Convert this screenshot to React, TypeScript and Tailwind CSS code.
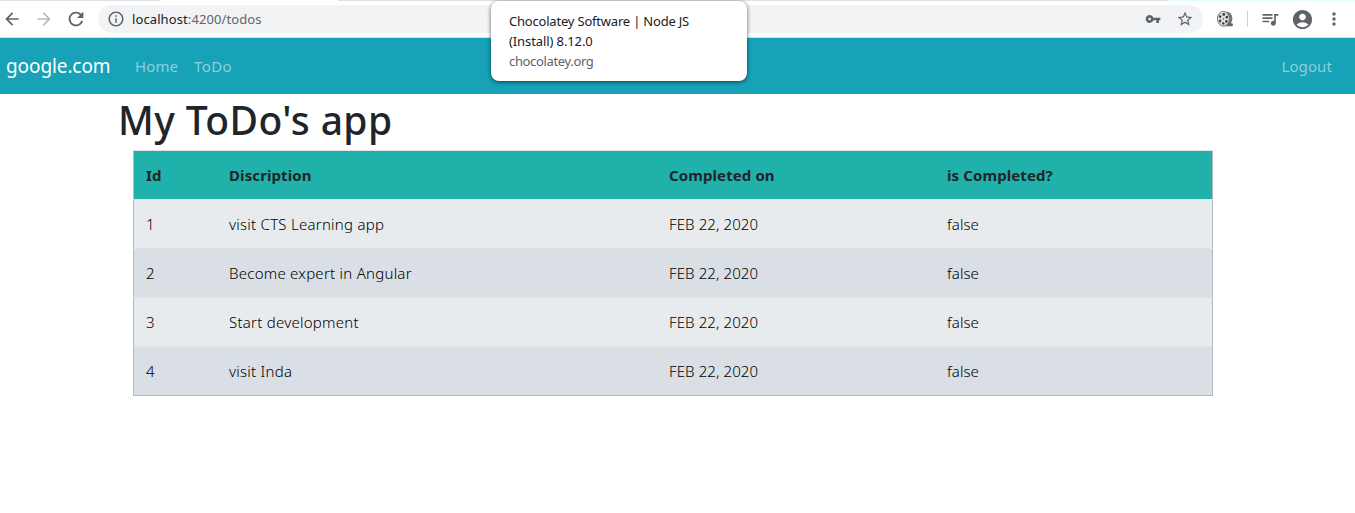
import { ReactNode } from "react";
import {
  MdArrowBack,
  MdArrowForward,
  MdRefresh,
  MdInfoOutline,
  MdVpnKey,
  MdStarBorder,
  MdQueueMusic,
  MdAccountCircle,
  MdMoreVert,
} from "react-icons/md";

const todos = [
  { id: 1, description: "visit CTS Learning app", date: "FEB 22, 2020", done: "false" },
  { id: 2, description: "Become expert in Angular", date: "FEB 22, 2020", done: "false" },
  { id: 3, description: "Start development", date: "FEB 22, 2020", done: "false" },
  { id: 4, description: "visit Inda", date: "FEB 22, 2020", done: "false" },
];

function Slot({ children, className }: { children: ReactNode; className: string }) {
  return <span className={`flex h-full shrink-0 items-center justify-center ${className}`}>{children}</span>;
}

function FilmReel() {
  return (
    <svg width="18" height="18" viewBox="0 0 18 18">
      <ellipse cx="11" cy="8.5" rx="5.4" ry="6.8" fill="#777" />
      <path d="M9 16.2h7.6l.4-2.4-3-1z" fill="#666" />
      <ellipse cx="7.4" cy="8.8" rx="6" ry="7.4" fill="#dedede" stroke="#6a6a6a" strokeWidth="0.9" />
      <g fill="#333">
        <ellipse cx="7.8" cy="4.4" rx="1.3" ry="1.3" />
        <ellipse cx="4.2" cy="6.6" rx="1.1" ry="1.4" />
        <ellipse cx="10.8" cy="7.2" rx="1.1" ry="1.4" />
        <ellipse cx="4.2" cy="11" rx="1.1" ry="1.4" />
        <ellipse cx="10.4" cy="11.4" rx="1.1" ry="1.4" />
        <ellipse cx="7.3" cy="13.4" rx="1.2" ry="1.2" />
        <circle cx="7.4" cy="8.9" r="0.6" />
      </g>
    </svg>
  );
}

function Toolbar() {
  return (
    <header className="h-[38px] border-b border-[#dadce0] bg-white">
      <div className="flex h-px">
        <div className="w-[160px] bg-[#dee1e6]" />
        <div className="w-[178px] bg-white" />
        <div className="w-[830px] bg-[#dee1e6]" />
        <div className="flex-1 bg-[#e8fbfd]" />
      </div>
      <div className="flex h-9 items-center text-[#5f6368]">
        <Slot className="ml-[-4px] w-8"><MdArrowBack size={20} /></Slot>
        <Slot className="w-8 text-[#babcbe]"><MdArrowForward size={20} /></Slot>
        <Slot className="w-8"><MdRefresh size={22} /></Slot>
        <div className="ml-[6px] flex h-7 w-[1105px] items-center rounded-full bg-[#f1f3f4]">
          <Slot className="ml-[9px] w-[18px]"><MdInfoOutline size={18} /></Slot>
          <span className="ml-[7px] text-[13px] leading-5 tracking-[0.1px]">
            <span className="text-[#202124]">localhost</span>:4200/todos
          </span>
          <Slot className="ml-auto w-8"><MdVpnKey size={16} /></Slot>
          <Slot className="mr-[2px] w-8"><MdStarBorder size={18} /></Slot>
        </div>
        <Slot className="ml-[13px] w-[18px]"><FilmReel /></Slot>
        <div className="ml-[13px] h-4 w-px bg-[#cfd1d4]" />
        <Slot className="ml-3 w-5"><MdQueueMusic size={20} /></Slot>
        <Slot className="ml-[10.5px] w-[23px]"><MdAccountCircle size={23} /></Slot>
        <Slot className="ml-[10.5px] w-5"><MdMoreVert size={20} /></Slot>
      </div>
    </header>
  );
}

function TabTooltip() {
  return (
    <div className="absolute left-[491px] top-px h-20 w-64 rounded-lg bg-white pl-[18px] pt-[10px] text-[13px] leading-5 text-[#202124] shadow-[0_1px_4px_rgba(0,0,0,0.6)]">
      <p className="tracking-[-0.2px]">Chocolatey Software | Node JS</p>
      <p className="tracking-[-0.1px]">(Install) 8.12.0</p>
      <p className="tracking-[-0.35px] text-[#5f6368]">chocolatey.org</p>
    </div>
  );
}

function Navbar() {
  return (
    <nav className="flex h-14 items-center bg-[#17a2b8] pl-[6px] pr-[23px] pt-px text-[15px] text-white/50">
      <span className="w-[105px] text-[19px] tracking-[-0.1px] text-white">google.com</span>
      <span className="ml-6 w-[59px] tracking-[0.1px]">Home</span>
      <span className="tracking-[0.4px]">ToDo</span>
      <span className="ml-auto tracking-[0.1px]">Logout</span>
    </nav>
  );
}

function TodoTable() {
  return (
    <table className="ml-[133px] mt-[6px] w-[1080px] table-fixed border-collapse border border-[#adbdc2] text-left text-[15px] leading-6">
      <colgroup>
        <col className="w-[83.5px]" />
        <col className="w-[440px]" />
        <col className="w-[278px]" />
        <col />
      </colgroup>
      <thead>
        <tr className="h-[49px] bg-[#20b2aa] font-bold tracking-[0.1px]">
          <th className="border-t border-[#dee2e6] px-3">Id</th>
          <th className="border-t border-[#dee2e6] px-3">Discription</th>
          <th className="border-t border-[#dee2e6] px-3">Completed on</th>
          <th className="border-t border-[#dee2e6] px-3">is Completed?</th>
        </tr>
      </thead>
      <tbody className="font-light text-black">
        {todos.map((t) => (
          <tr key={t.id} className="h-[49px] odd:bg-[#e8ebee] even:bg-[#dadfe6]">
            <td className="border-t border-[#dee2e6] px-3">{t.id}</td>
            <td className="border-t border-[#dee2e6] px-3 tracking-[0.25px]">{t.description}</td>
            <td className="border-t border-[#dee2e6] px-3 tracking-[0.1px]">{t.date}</td>
            <td className="border-t border-[#dee2e6] px-3 tracking-[0.1px]">{t.done}</td>
          </tr>
        ))}
      </tbody>
    </table>
  );
}

export default function App() {
  return (
    <div className="relative h-[513px] w-[1355px] overflow-hidden bg-white font-['Noto_Sans',sans-serif] text-[#212529]">
      <Toolbar />
      <Navbar />
      <h1 className="ml-[118px] mt-[2px] h-12 text-[39px] font-medium leading-[48px] tracking-[0.4px]">My ToDo's app</h1>
      <TodoTable />
      <TabTooltip />
    </div>
  );
}
